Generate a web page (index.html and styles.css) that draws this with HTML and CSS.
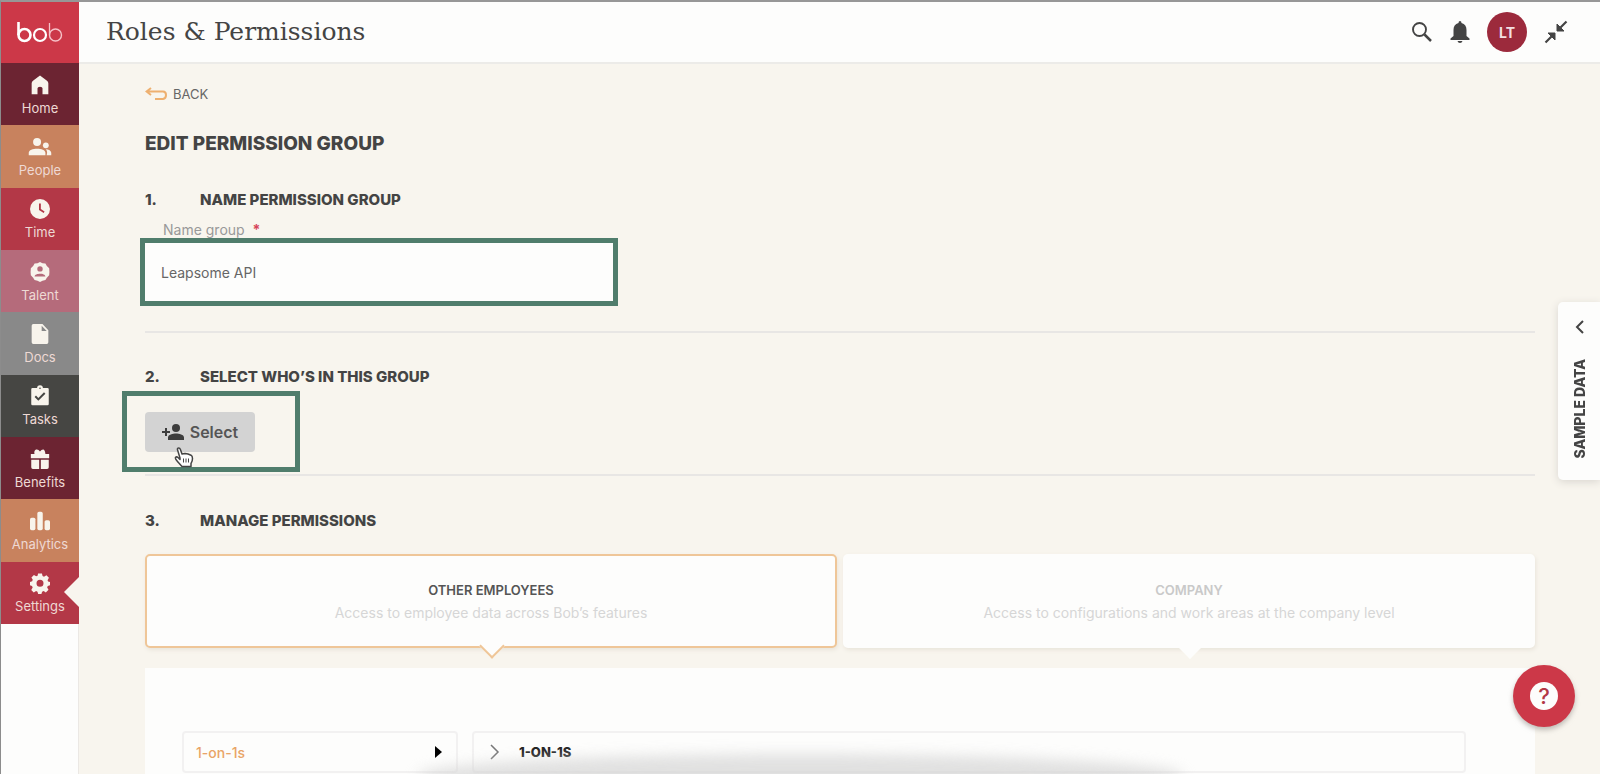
FILE: index.html
```html
<!DOCTYPE html>
<html lang="en">
<head>
<meta charset="utf-8">
<title>Roles &amp; Permissions</title>
<link rel="stylesheet" href="styles.css">
</head>
<body>
<div class="app">
  <aside class="sidebar">
    <a class="logo" href="#" aria-label="bob"><svg width="48" height="24" viewBox="0 0 48 24" fill="none" stroke="#fff"><path d="M2.500 1v13" stroke-width="2.600"/><circle cx="8.500" cy="14" r="6" stroke-width="2.600"/><circle cx="24" cy="14" r="6" stroke-width="2.200"/><path d="M33.500 2v12" stroke-width="1.300" stroke="#f6c3c9"/><circle cx="39.500" cy="14" r="6" stroke-width="1.400" stroke="#f6c3c9"/></svg></a>
    <nav class="nav">
      <a class="nav-item plum" href="#"><svg viewBox="0 0 24 24"><path d="M12 .500 20 6.500q2 1.500 2 3.500v13h-7v-7q0-2-3-2t-3 2v7H2V10q0-2 2-3.500z"/></svg>Home</a>
      <a class="nav-item orange" href="#"><svg viewBox="0 0 24 24"><circle cx="8.500" cy="6" r="4.800"/><path d="M-1.500 22v-3c0-3.500 5-5 10-5s10 1.500 10 5v3zM20 22h5.500v-3c0-2.500-3-4-6.500-4.300 1 1.200 1.500 2.500 1.500 4.300z"/><circle cx="19" cy="10" r="3.500"/></svg>People</a>
      <a class="nav-item red" href="#"><svg viewBox="0 0 24 24"><path fill-rule="evenodd" d="M12 0a12 12 0 1 0 0 24 12 12 0 0 0 0-24zm-1.200 5.500h2.200v6.500l4.500 3-1.100 1.800-5.600-3.500z"/></svg>Time</a>
      <a class="nav-item pink" href="#"><svg viewBox="0 0 24 24"><path fill-rule="evenodd" d="M12 0l3 1.500 3.500.300 1.700 3L23 7.500 23.300 12 23 16l-2.800 3-1.700 2.700-3.500.800L12 24l-3-1.500-3.500-.800L3.800 19 1 16 .700 12 1 7.500l2.800-2.700 1.700-3L9 1.500zm0 5a3.200 3.200 0 1 0 0 6.500 3.200 3.200 0 0 0 0-6.500zM5.500 17.500h13c0-2.500-3.500-3.500-6.500-3.500s-6.500 1-6.500 3.500z"/></svg>Talent</a>
      <a class="nav-item gray" href="#"><svg viewBox="0 0 24 24"><path fill-rule="evenodd" d="M4 0h11l7 7.500V22q0 2-2 2H4q-2 0-2-2V2Q2 0 4 0zm10 2v6.500h6z"/></svg>Docs</a>
      <a class="nav-item dark" href="#"><svg viewBox="0 0 24 24"><path fill-rule="evenodd" d="M3 2.500h5.500a3.500 3.500 0 0 1 7 0H21q1.500 0 1.500 1.500v17.500q0 1.500-1.500 1.500H3q-1.500 0-1.500-1.500V4q0-1.500 1.500-1.500zm9-.800a1 1 0 1 0 0 2 1 1 0 0 0 0-2zM7.200 11.500 5.500 13.200l4.500 4.500 8.500-8.500-1.700-1.700-6.800 6.800z"/></svg>Tasks</a>
      <a class="nav-item plum" href="#"><svg viewBox="0 0 24 24"><path d="M1 6h4.500C4.500 3 6 .500 8.300.500q2 0 3.700 2.400Q13.700.500 15.700.500 18 .500 18.500 6H23v5H1zM1.500 13H11v11H3.500q-2 0-2-2zM13 13h9.500v9q0 2-2 2H13z"/></svg>Benefits</a>
      <a class="nav-item orange" href="#"><svg viewBox="0 0 24 24"><rect y="8" width="6.500" height="15" rx="2"/><rect x="8.800" y="1" width="6.500" height="22" rx="2"/><rect x="17.500" y="11" width="6.500" height="12" rx="2"/></svg>Analytics</a>
      <a class="nav-item red current" href="#" aria-current="page"><svg viewBox="0 0 24 24"><path fill-rule="evenodd" d="M9.700.500h4.600l.800 3.200 1.700.700 2.900-1.700 3 3-1.600 2.900.600 1.700 2.300.600v3.800l-2.700.900-.700 1.700 1.600 2.800-3.200 3.200-2.600-1.700-1.900.800-.800 2.800H9.800L9 22.400l-1.700-.800-2.800 1.700-3-3 1.700-2.900-.800-1.900L0 14.700v-4l2.600-.900.700-1.700-1.600-2.700 3-3 2.700 1.600 1.700-.700zM12 8a4.200 4.200 0 1 0 0 8.400A4.200 4.200 0 0 0 12 8z"/></svg>Settings</a>
    </nav>
  </aside>
  <div class="page">
    <header class="topbar">
      <h1>Roles &amp; Permissions</h1>
      <div class="tools">
        <button class="tool" aria-label="Search"><svg width="22" height="22" viewBox="0 0 22 22" fill="none" stroke="#444"><circle cx="8.500" cy="8.500" r="6.500" stroke-width="1.900"/><path d="m13.500 13.500 6.500 6.500" stroke-width="2.500"/></svg></button>
        <button class="tool" aria-label="Notifications"><svg width="20" height="22" viewBox="0 0 20 22" fill="#444"><path d="M10 0q1.500 0 1.500 2C15 3 16.500 5.500 16.500 9v6l3 2.500V19H.500v-1.500l3-2.500V9C3.500 5.500 5 3 8.500 2Q8.500 0 10 0zM7.500 20h5q-.5 2-2.500 2t-2.500-2z"/></svg></button>
        <button class="avatar">LT</button>
        <button class="tool" aria-label="Collapse"><svg width="24" height="24" viewBox="0 0 24 24" fill="#444" stroke="#444" stroke-width="2.200"><path d="m22.500 1.500-7 7M1.500 22.500l7-7" fill="none"/><path d="M13 4v7h7zM4 13h7v7z" stroke-width="1"/></svg></button>
      </div>
    </header>
    <main class="content">
      <a class="back" href="#"><svg width="22" height="14" viewBox="0 0 22 14" fill="none" stroke="#eeb070" stroke-width="2"><path d="M6 1 1.500 4.500 6 8M2 4.500h16q3 0 3 3.500t-3 4h-8"/></svg>BACK</a>
      <h2>EDIT PERMISSION GROUP</h2>

      <section class="step">
        <h3><span>1.</span>NAME PERMISSION GROUP</h3>
        <label class="field-label" for="group-name">Name group <b>*</b></label>
        <input class="field" id="group-name" type="text" value="Leapsome API">
      </section>

      <section class="step members">
        <h3><span>2.</span>SELECT WHO’S IN THIS GROUP</h3>
        <div class="picker">
          <button class="select"><svg width="22" height="16" viewBox="0 0 22 16" fill="#3d3d3d"><circle cx="14" cy="4" r="4"/><path d="M6 16v-2.500C6 10.500 11 9.500 14 9.500s8 1 8 4V16zM3 4h2v3h3v2H5v3H3V9H0V7h3z"/></svg>Select</button>
          <svg class="pointer" width="20" height="21" viewBox="0 0 20 21" fill="#fff" stroke="#444" stroke-width="1.500" stroke-linejoin="round"><path d="M6 11 3.500 2.800Q3.200 1 4.700 1q1.200 0 1.700 1.500L8 7l3-.600 3 .600 3 1.200q1.500.800 1.500 3.300 0 3-1.500 5v3H8L3.500 14.500Q.800 11.500 1.500 10.500q1-1.200 2.500 0L6 12.500z"/><path d="M9.500 11.500v4M12 11.500v4M14.500 11.500v4" stroke-width="1"/></svg>
        </div>
      </section>

      <section class="permissions">
        <h3><span>3.</span>MANAGE PERMISSIONS</h3>
        <div class="scopes">
          <button class="scope chosen"><strong>OTHER EMPLOYEES</strong><span>Access to employee data across Bob’s features</span></button>
          <button class="scope"><strong>COMPANY</strong><span>Access to configurations and work areas at the company level</span></button>
        </div>
        <div class="panel">
          <button class="category">1-on-1s<svg width="7" height="12" viewBox="0 0 7 12"><path d="M0 0 7 6 0 12z"/></svg></button>
          <button class="group"><svg width="10" height="16" viewBox="0 0 10 16" fill="none" stroke="#777" stroke-width="1.500"><path d="m1 1 7 7-7 7"/></svg>1-ON-1S</button>
        </div>
      </section>
    </main>
  </div>
  <button class="sample"><svg width="9" height="14" viewBox="0 0 9 14" fill="none" stroke="#444" stroke-width="2"><path d="M8 1 2 7l6 6"/></svg><span>SAMPLE DATA</span></button>
  <button class="help" aria-label="Help"><span>?</span></button>
  <div class="dock-shade"></div>
</div>
</body>
</html>
```
FILE: styles.css
```css
* { box-sizing: border-box; }
body {
  margin: 0;
  font-family: Inter, "Open Sans", sans-serif;
  font-size: 14px;
  color: #444;
  background: #f8f5ee;
}
button { font: inherit; color: inherit; border: 0; background: none; padding: 0; }
a { color: inherit; text-decoration: none; }
h1, h2, h3 { margin: 0; }

.app {
  position: relative;
  display: flex;
  height: 100vh;
  overflow: hidden;
  border-top: 2px solid #979797;
  border-left: 1px solid #8c8c8c;
}

.sidebar { flex: none; width: 78px; background: #fdfdfc; border-right: 1px solid #ebe8e4; }
.logo {
  display: flex;
  align-items: center;
  justify-content: center;
  width: 78px;
  height: 61px;
  background: #cc3848;
}
.nav { display: grid; grid-template-rows: repeat(9, 1fr); width: 78px; height: 561px; }
.nav-item {
  position: relative;
  display: flex;
  flex-direction: column;
  align-items: center;
  justify-content: center;
  gap: 5px;
  padding-top: 2px;
  font-size: 13px;
  line-height: 16px;
  color: #eed9d4;
}
.nav-item svg { width: 20px; height: 20px; fill: #f8f4ec; overflow: visible; }
.plum { background: #6c2432; }
.orange { background: #c8825e; }
.red { background: #b33847; }
.pink { background: #b56b7b; }
.gray { background: #898989; }
.dark { background: #464643; }
.current::after {
  content: "";
  position: absolute;
  right: 0;
  top: 15px;
  border: 15px solid transparent;
  border-left-width: 0;
  border-right-color: #f8f5ee;
}

.page { flex: 1; min-width: 0; display: flex; flex-direction: column; }
.topbar {
  flex: none;
  display: flex;
  align-items: center;
  justify-content: space-between;
  height: 62px;
  padding: 0 32px 0 27px;
  background: #fdfdfc;
  border-bottom: 2px solid #ecebe8;
}
h1 { font: 25px/32px "DejaVu Serif", serif; color: #444; }
.tools { display: flex; align-items: center; gap: 17px; }
.tool { display: flex; }
.avatar {
  width: 40px;
  height: 40px;
  border-radius: 50%;
  background: #9c2a3c;
  color: #f3dfe2;
  font-weight: 700;
}

.content { padding: 20px 65px 0 66px; }
.back { display: inline-flex; align-items: center; gap: 6px; line-height: 20px; font-size: 13px; color: #666; }
h2 { margin-top: 28px; font-size: 19px; font-weight: 800; line-height: 24px; }
h3 { display: flex; font-size: 15px; font-weight: 800; line-height: 20px; }
h3 span { width: 55px; }

.step { border-bottom: 2px solid #e8e6e4; padding: 34px 0 30px; }
.field-label { display: block; padding: 10px 0 0 18px; line-height: 20px; color: #999; }
.field-label b { color: #d6455a; margin-left: 4px; }
.field {
  display: block;
  width: 468px;
  height: 58px;
  margin-top: 3px;
  padding: 0 16px;
  border: 0;
  outline: 5px solid #507d6c;
  background: #fdfdfc;
  font: 14px Inter, sans-serif;
  color: #666;
}
.members { padding-bottom: 22px; }
.picker { position: relative; width: 110px; margin-top: 25px; }
.picker::before {
  content: "";
  position: absolute;
  inset: -21px -45px -20px -23px;
  border: 5px solid #507d6c;
}
.select {
  position: relative;
  display: flex;
  align-items: center;
  justify-content: center;
  gap: 6px;
  width: 110px;
  height: 40px;
  border-radius: 4px;
  background: #d3d3d3;
  font-size: 16px;
  font-weight: 600;
  color: #555;
}
.pointer { position: absolute; left: 29px; top: 35px; }

.permissions { padding-top: 35px; }
.scopes { display: grid; grid-template-columns: 1fr 1fr; gap: 6px; margin-top: 23px; }
.scope {
  position: relative;
  display: flex;
  flex-direction: column;
  align-items: center;
  justify-content: center;
  gap: 3px;
  height: 94px;
  border: 2px solid #fdfdfc;
  border-radius: 5px;
  background: #fdfdfc;
  box-shadow: 1px 2px 4px #e9e4da;
  font-size: 14px;
  line-height: 20px;
  color: #d6d6d6;
}
.scope strong { font-size: 13px; font-weight: 600; color: #c9c9c9; }
.scope::after {
  content: "";
  position: absolute;
  left: 50%;
  bottom: -9px;
  width: 16px;
  height: 16px;
  margin-left: -8px;
  border: solid #fdfdfc;
  border-width: 0 2px 2px 0;
  background: #fdfdfc;
  transform: rotate(45deg);
}
.chosen, .chosen::after { border-color: #efc698; }
.chosen strong { color: #555; }
.panel {
  display: grid;
  grid-template-columns: 276px 1fr;
  gap: 14px;
  margin-top: 20px;
  height: 140px;
  padding: 63px 69px 0 37px;
  background: #fdfdfc;
}
.category, .group {
  display: flex;
  align-items: center;
  height: 42px;
  border: 2px solid #f2f1f1;
  border-radius: 4px;
}
.category { justify-content: space-between; padding: 0 14px 0 12px; color: #e9a466; font-weight: 500; }
.group { gap: 19px; padding-left: 16px; font-size: 13px; font-weight: 800; color: #222; }

.sample {
  position: absolute;
  right: 0;
  top: 300px;
  display: flex;
  flex-direction: column;
  align-items: center;
  gap: 25px;
  width: 42px;
  height: 178px;
  padding-top: 18px;
  border-radius: 5px 0 0 5px;
  background: #fdfdfc;
  box-shadow: 0 2px 8px #d9d6d0;
  font-weight: 800;
}
.sample span { writing-mode: vertical-rl; transform: rotate(180deg); }
.help {
  position: absolute;
  right: 25px;
  bottom: 47px;
  display: grid;
  place-items: center;
  width: 62px;
  height: 62px;
  border-radius: 50%;
  background: #cc3848;
  box-shadow: 0 3px 5px #99949099;
}
.help span {
  width: 28px;
  border-radius: 50%;
  background: #fdfdfc;
  color: #b33847;
  font-size: 22px;
  font-weight: 500;
  line-height: 28px;
}
.dock-shade {
  position: absolute;
  left: 26%;
  right: 26%;
  bottom: -24px;
  height: 44px;
  border-radius: 50%;
  background: #d5d5d5;
  filter: blur(7px);
  opacity: .7;
  pointer-events: none;
}
```
